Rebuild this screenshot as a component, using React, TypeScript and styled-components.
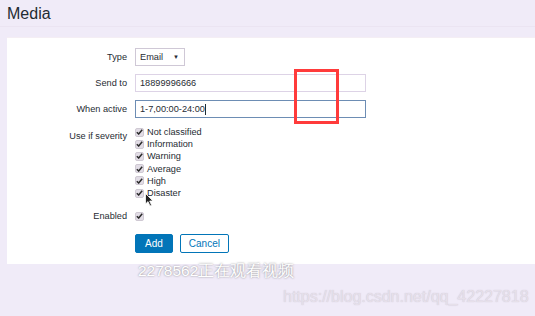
import * as React from "react";
import styled, { createGlobalStyle } from "styled-components";

const severities = [
  "Not classified",
  "Information",
  "Warning",
  "Average",
  "High",
  "Disaster",
];

const Check = () => (
  <CheckBox>
    <svg width="7" height="6" viewBox="0 0 7 6">
      <path d="M0.8 3.2 L2.7 5 L6.2 0.8" fill="none" stroke="#2b2b2b" strokeWidth="1.5" />
    </svg>
  </CheckBox>
);

const App = () => (
  <Page>
    <GlobalStyle />
    <Header>
      <Title>Media</Title>
    </Header>
    <Panel>
      <Form>
        <Label>Type</Label>
        <Field>
          <Select>
            Email <Arrow>▼</Arrow>
          </Select>
        </Field>
        <Label>Send to</Label>
        <Field>
          <Input>18899996666</Input>
        </Field>
        <Label>When active</Label>
        <Field>
          <Input focused>
            1-7,00:00-24:00<Caret />
          </Input>
        </Field>
        <Label tall>Use if severity</Label>
        <List>
          {severities.map((s) => (
            <Item key={s}>
              <Check />
              <span>{s}</span>
            </Item>
          ))}
        </List>
        <Label>Enabled</Label>
        <Field>
          <Check />
        </Field>
        <span />
        <Buttons>
          <Button primary>Add</Button>
          <Button>Cancel</Button>
        </Buttons>
      </Form>
    </Panel>
    <Marker />
    <Pointer width="9" height="14" viewBox="0 0 9 14">
      <path d="M0.5 0.5 L0.5 11 L3 8.6 L5 13 L6.6 12.3 L4.7 8 L8 8 Z" fill="#222" stroke="#fff" strokeWidth="0.8" />
    </Pointer>
    <Watermark>2278562正在观看视频</Watermark>
    <Url>https://blog.csdn.net/qq_42227818</Url>
  </Page>
);

const GlobalStyle = createGlobalStyle`
  html, body {
    margin: 0;
    background: #f0ebf8;
  }
  body {
    font-family: "Liberation Sans", Arial, sans-serif;
    color: #1f2c33;
  }
`;

const Page = styled.div`
  position: relative;
  width: 535px;
  height: 316px;
  overflow: hidden;
  background: #f0ebf8;
`;

const Header = styled.div`
  height: 27px;
  padding-left: 7px;
  border-bottom: 1px solid #ebe4f2;
  box-sizing: border-box;
`;

const Title = styled.h1`
  margin: 0;
  padding-top: 5px;
  font-size: 16px;
  font-weight: normal;
  color: #1f2c33;
  line-height: 18px;
`;

const Panel = styled.div`
  margin: 10px 0 0 7px;
  height: 227px;
  box-sizing: border-box;
  background: #fff;
  border-top: 1px solid #f4eef4;
  padding-top: 10px;
`;

const Form = styled.div`
  display: grid;
  grid-template-columns: 120px 1fr;
  column-gap: 8px;
  row-gap: 8px;
  font-size: 9.2px;
`;

const Label = styled.div<{ tall?: boolean }>`
  text-align: right;
  line-height: ${(p) => (p.tall ? "12px" : "18px")};
  padding-top: ${(p) => (p.tall ? "4px" : "0")};
  color: #1f2c33;
`;

const Field = styled.div`
  display: flex;
  align-items: center;
  height: 18px;
`;

const Select = styled.div`
  width: 50px;
  height: 18px;
  box-sizing: border-box;
  border: 1px solid #cfc8d6;
  display: flex;
  align-items: center;
  justify-content: space-between;
  padding: 0 5px 0 4px;
  background: #fff;
`;

const Arrow = styled.span`
  font-size: 6px;
`;

const Input = styled.div<{ focused?: boolean }>`
  width: 231px;
  height: 18px;
  box-sizing: border-box;
  border: 1px solid ${(p) => (p.focused ? "#6d8db4" : "#ddd3e6")};
  padding-left: 4px;
  display: flex;
  align-items: center;
  background: #fff;
`;

const Caret = styled.span`
  display: inline-block;
  width: 1px;
  height: 11px;
  background: #1f2c33;
`;

const List = styled.div`
  display: flex;
  flex-direction: column;
`;

const Item = styled.div`
  display: flex;
  align-items: center;
  gap: 3px;
  height: 12.2px;
`;

const CheckBox = styled.span`
  width: 9px;
  height: 9px;
  border-radius: 2px;
  background: #e2dde6;
  border: 1px solid #cfc9d3;
  box-sizing: border-box;
  display: flex;
  align-items: center;
  justify-content: center;
`;

const Buttons = styled.div`
  display: flex;
  gap: 7px;
  margin-top: 1px;
`;

const Button = styled.div<{ primary?: boolean }>`
  height: 19px;
  box-sizing: border-box;
  padding: 0 ${(p) => (p.primary ? "9px" : "8px")};
  border-radius: 2px;
  border: 1px solid #0275b8;
  background: ${(p) => (p.primary ? "#0275b8" : "#fff")};
  color: ${(p) => (p.primary ? "#fff" : "#0275b8")};
  display: flex;
  align-items: center;
  font-size: 10px;
`;

const Marker = styled.div`
  position: absolute;
  left: 294px;
  top: 69px;
  width: 45px;
  height: 55px;
  box-sizing: border-box;
  border: 3px solid #ff3b3b;
`;

const Pointer = styled.svg`
  position: absolute;
  left: 145px;
  top: 193px;
`;

const Watermark = styled.div`
  position: absolute;
  left: 138px;
  top: 261px;
  font-size: 15.5px;
  color: #fff;
  text-shadow: 0 0 2px rgba(80, 80, 80, 0.7);
`;

const Url = styled.div`
  position: absolute;
  left: 283px;
  top: 288px;
  font-size: 16px;
  color: #e6e0ea;
  text-shadow: 0 0 1px rgba(160, 150, 170, 0.5);
`;

export default App;
